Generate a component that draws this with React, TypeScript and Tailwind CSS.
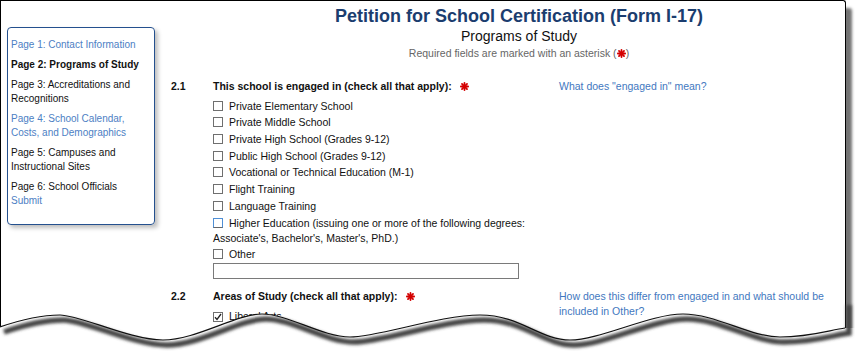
import React from 'react';

const font = { fontFamily: '"Liberation Sans", Arial, sans-serif' };

function Req() {
  return (
    <svg width="9" height="9" viewBox="0 0 10 10" className="inline-block align-[-1px]">
      <g stroke="#d40000" strokeWidth="2" strokeLinecap="round">
        <line x1="5" y1="1" x2="5" y2="9" />
        <line x1="1" y1="5" x2="9" y2="5" />
        <line x1="2.2" y1="2.2" x2="7.8" y2="7.8" />
        <line x1="7.8" y1="2.2" x2="2.2" y2="7.8" />
      </g>
    </svg>
  );
}

function Box({ checked, focus }: { checked?: boolean; focus?: boolean }) {
  return (
    <span
      className={`inline-flex items-center justify-center w-[10px] h-[10px] border bg-white align-[-1px] mr-[6px] ${
        focus ? 'border-[#4f8fd6] border-b-[#666] border-b-dotted border-r-dotted' : 'border-[#6f6f6f]'
      }`}
    >
      {checked && (
        <svg width="8" height="8" viewBox="0 0 8 8">
          <path d="M1 4.2 L3 6.4 L7 1" fill="none" stroke="#222" strokeWidth="1.3" />
        </svg>
      )}
    </span>
  );
}

const engaged = [
  'Private Elementary School',
  'Private Middle School',
  'Private High School (Grades 9-12)',
  'Public High School (Grades 9-12)',
  'Vocational or Technical Education (M-1)',
  'Flight Training',
  'Language Training',
];

const wave =
  'C20,320 40,315 60,315 S130,340 163,340 S236,314 262,314 S322,337 350,337 S440,315 480,315 S540,340 570,340 S650,314 683,314 S750,337 780,337 S830,330 845,328';

export default function App() {
  return (
    <div className="relative w-[860px] h-[357px] overflow-hidden bg-white text-[#111]" style={font}>
      <div className="w-[846px] h-[357px] border-l border-t border-r border-black rounded-tr-[3px] bg-white shadow-[6px_8px_3px_rgba(0,0,0,0.55)] flex">
        {/* left nav */}
        <aside className="ml-[6px] mt-[26px] w-[148px] h-[198px] shrink-0 border border-[#24508e] rounded-[4px] shadow-[3px_3px_4px_rgba(0,0,0,0.25)] pl-[3px] pt-[10px] text-[10px] leading-[14px]">
          <div className="text-[#4d80c4]">Page 1: Contact Information</div>
          <div className="mt-[6px] font-bold">Page 2: Programs of Study</div>
          <div className="mt-[6px]">
            Page 3: Accreditations and
            <br />
            Recognitions
          </div>
          <div className="mt-[6px] text-[#4d80c4]">
            Page 4: School Calendar,
            <br />
            Costs, and Demographics
          </div>
          <div className="mt-[6px]">
            Page 5: Campuses and
            <br />
            Instructional Sites
          </div>
          <div className="mt-[6px]">Page 6: School Officials</div>
          <div className="text-[#4d80c4]">Submit</div>
        </aside>

        <main className="flex-1 pl-[16px]">
          <header className="pl-[22px] pt-[5px] text-center">
            <h1 className="text-[18px] leading-[20px] font-bold text-[#1b3d6f]">
              Petition for School Certification (Form I-17)
            </h1>
            <div className="text-[14px] leading-[20px]">Programs of Study</div>
            <div className="text-[10.5px] leading-[14px] text-[#666]">
              Required fields are marked with an asterisk (<Req />)
            </div>
          </header>

          {/* 2.1 */}
          <section className="mt-[19px] grid grid-cols-[42px_346px_1fr] text-[10.5px]">
            <div className="font-bold leading-[14px]">2.1</div>
            <div>
              <div className="font-bold leading-[14px]">
                This school is engaged in (check all that apply):&nbsp;&nbsp; <Req />
              </div>
              <div className="mt-[5.7px]">
                {engaged.map((t) => (
                  <div key={t} className="leading-[15px] mb-[1.7px] whitespace-nowrap">
                    <Box />
                    {t}
                  </div>
                ))}
                <div className="leading-[15px] mb-[1.7px] whitespace-nowrap">
                  <Box focus />
                  Higher Education (issuing one or more of the following degrees:
                  <br />
                  Associate's, Bachelor's, Master's, PhD.)
                </div>
                <div className="leading-[15px]">
                  <Box />
                  Other
                </div>
                <input
                  type="text"
                  className="mt-[1px] block w-[306px] h-[16px] border border-[#7a7a7a] bg-white outline-none"
                />
              </div>
            </div>
            <div className="leading-[14px] text-[#3f78c0]">What does "engaged in" mean?</div>
          </section>

          {/* 2.2 */}
          <section className="mt-[10px] grid grid-cols-[42px_346px_1fr] text-[10.5px]">
            <div className="font-bold leading-[14px]">2.2</div>
            <div>
              <div className="font-bold leading-[14px]">
                Areas of Study (check all that apply):&nbsp;&nbsp; <Req />
              </div>
              <div className="mt-[6px] leading-[15px]">
                <Box checked />
                Liberal Arts
              </div>
            </div>
            <div className="leading-[15px] text-[#3f78c0] -mt-[0.5px]">
              How does this differ from engaged in and what should be
              <br />
              included in Other?
            </div>
          </section>
        </main>
      </div>

      {/* torn paper edge */}
      <svg className="absolute left-0 top-0 pointer-events-none" width="860" height="357" viewBox="0 0 860 357">
        <defs>
          <filter id="blur" x="-5%" y="-50%" width="110%" height="200%">
            <feGaussianBlur stdDeviation="1.7" />
          </filter>
        </defs>
        <path d={`M-2,327 L0,327 ${wave} L860,328 L860,357 L-2,357 Z`} fill="#fff" />
        <path
          d={`M0,327 ${wave} L845,300`}
          transform="translate(4,5)"
          fill="none"
          stroke="#444"
          strokeWidth="5.5"
          filter="url(#blur)"
        />
        <path d={`M0,327 ${wave}`} fill="none" stroke="#111" strokeWidth="1.2" />
      </svg>
    </div>
  );
}
